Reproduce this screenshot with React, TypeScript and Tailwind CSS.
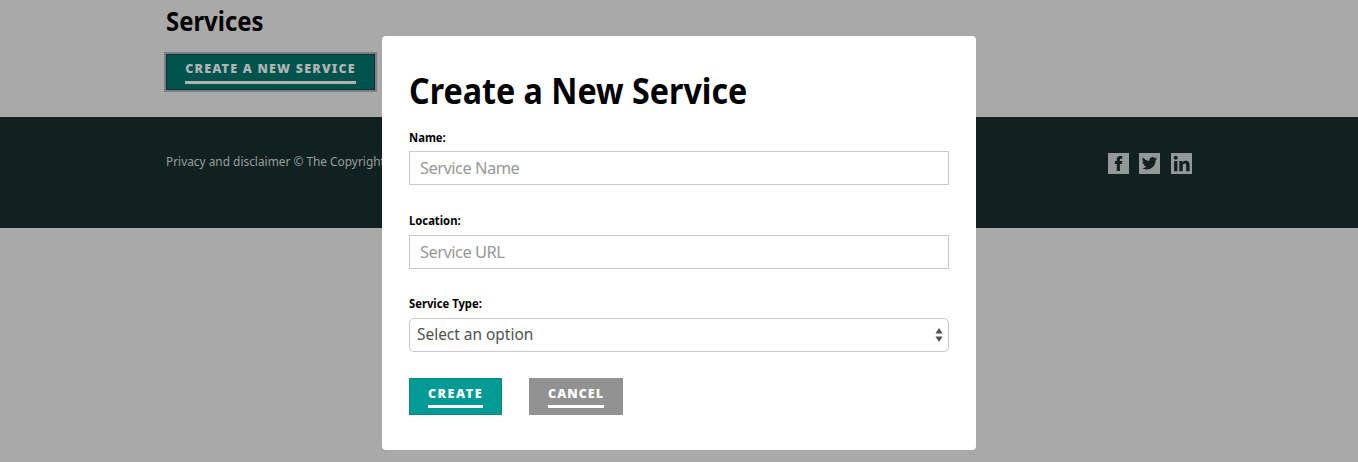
import type { ReactNode } from "react";

function Button({ children, className }: { children: ReactNode; className: string }) {
  return (
    <button type="button" className={`flex shrink-0 justify-center border pt-[6px] text-[12.5px] font-black uppercase ${className}`}>
      <span className="block h-[23px] whitespace-nowrap border-b-[3px] border-current">{children}</span>
    </button>
  );
}

function FieldLabel({ htmlFor, children }: { htmlFor: string; children: ReactNode }) {
  return (
    <label htmlFor={htmlFor} className="block h-[18px] w-fit origin-left scale-x-90 text-[12.5px] leading-[18px] font-bold text-black">
      {children}
    </label>
  );
}

function TextField({ id, label, placeholder, className }: { id: string; label: string; placeholder: string; className: string }) {
  return (
    <div className={`flex flex-col justify-between ${className}`}>
      <FieldLabel htmlFor={id}>{label}</FieldLabel>
      <input
        id={id}
        placeholder={placeholder}
        className="block h-[34px] w-full border border-[#c8c8c8] bg-white px-[10px] pb-[2px] text-[16.5px] tracking-[-0.55px] placeholder:text-[#999999] outline-none"
      />
    </div>
  );
}

function SocialIcon({ label, children }: { label: string; children: ReactNode }) {
  return (
    <a href="#" aria-label={label} className="block size-[21px] bg-[#949998]">
      <svg viewBox="0 0 21 21" className="size-full fill-[#11211f]">
        {children}
      </svg>
    </a>
  );
}

export default function App() {
  return (
    <div className="relative h-[462px] overflow-hidden bg-[#a9a9a9] font-['Noto_Sans',sans-serif]">
      <main className="h-[117px] pl-[166px] pt-[6px]">
        <h1 className="mb-[18px] h-[30px] w-fit origin-left scale-x-[0.885] text-[27px] leading-[30px] font-bold text-black">Services</h1>
        <Button className="h-[36px] w-[209px] border-[#12302d] bg-[#00534c] leading-[16px] tracking-[1.2px] text-[#b0b4b4] shadow-[0_0_0_2px_#7c7f84]">
          Create a new service
        </Button>
      </main>

      <footer className="flex h-[111px] justify-between bg-[#11211f] px-[166px] pt-[36px]">
        <p className="mt-px h-[16px] origin-left scale-x-[0.95] text-[12.5px] leading-[16px] text-[#989f9e]">Privacy and disclaimer © The Copyright</p>
        <div className="flex">
          <SocialIcon label="Facebook">
            <path d="M8.8 18v-7H6.8V8.1h2V6.5C8.8 4 10.2 3 12.3 3h1.9v2.8h-1.3c-.8 0-1 .4-1 1.1v1.2h2.3L13.9 11h-2v7Z" />
          </SocialIcon>
          <div className="mr-[11px] ml-[10px]">
            <SocialIcon label="Twitter">
              <path
                transform="translate(2.8 2.6) scale(.64)"
                d="M23.95 4.57a10 10 0 0 1-2.82.77 4.96 4.96 0 0 0 2.16-2.72c-.95.55-2 .95-3.12 1.18a4.92 4.92 0 0 0-8.38 4.48A13.93 13.93 0 0 1 1.64 3.16a4.92 4.92 0 0 0 1.52 6.57 4.9 4.9 0 0 1-2.23-.61v.06a4.92 4.92 0 0 0 3.95 4.83 5 5 0 0 1-2.21.08 4.94 4.94 0 0 0 4.6 3.42A9.87 9.87 0 0 1 0 19.54a13.94 13.94 0 0 0 7.55 2.21c9.05 0 14-7.5 14-13.98l-.02-.64a9.94 9.94 0 0 0 2.42-2.56Z"
              />
            </SocialIcon>
          </div>
          <SocialIcon label="LinkedIn">
            <circle cx="4.7" cy="4.7" r="2" />
            <path d="M3.1 8h3.3v10.3H3.1ZM8.3 8h3.2v1.4c.6-1 1.8-1.7 3.3-1.7 3 0 3.8 1.8 3.8 4.5v6.1h-3.4v-5.6c0-1.4-.3-2.3-1.6-2.3-1.4 0-1.9 1-1.9 2.4v5.5H8.3Z" />
          </SocialIcon>
        </div>
      </footer>

      <section role="dialog" aria-label="Create a New Service" className="absolute left-[382px] top-[36px] h-[414px] w-[594px] rounded-[4px] bg-white px-[27px] pt-[33px]">
        <h2 className="mb-[17px] h-[43px] w-fit origin-left scale-x-[0.895] whitespace-nowrap text-[36px] leading-[43px] font-bold text-black">Create a New Service</h2>
        <TextField id="name" label="Name:" placeholder="Service Name" className="h-[56px]" />
        <TextField id="location" label="Location:" placeholder="Service URL" className="mt-[27px] h-[57px]" />
        <div className="mt-[26px] flex h-[57px] flex-col justify-between">
          <FieldLabel htmlFor="type">Service Type:</FieldLabel>
          <button id="type" type="button" className="flex h-[34px] w-full items-center justify-between rounded-[5px] border border-[#c8c8c8] bg-white pl-[7px] pr-[5px] text-[16.5px] text-[#505050]">
            <span className="-mt-px origin-left scale-x-[0.935]">Select an option</span>
            <svg viewBox="0 0 8 14" className="h-[14px] w-[8px] fill-[#505050]">
              <path d="M4 0 7.5 5.5h-7ZM.5 8.5h7L4 14Z" />
            </svg>
          </button>
        </div>
        <div className="mt-[26px] flex gap-[27px]">
          <Button className="h-[37px] w-[93px] border-[#0b8b80] bg-[#009b95] leading-[18px] tracking-[1.55px] text-white">Create</Button>
          <Button className="h-[37px] w-[94px] border-[#929292] bg-[#929292] leading-[18px] tracking-[1px] text-white">Cancel</Button>
        </div>
      </section>
    </div>
  );
}
